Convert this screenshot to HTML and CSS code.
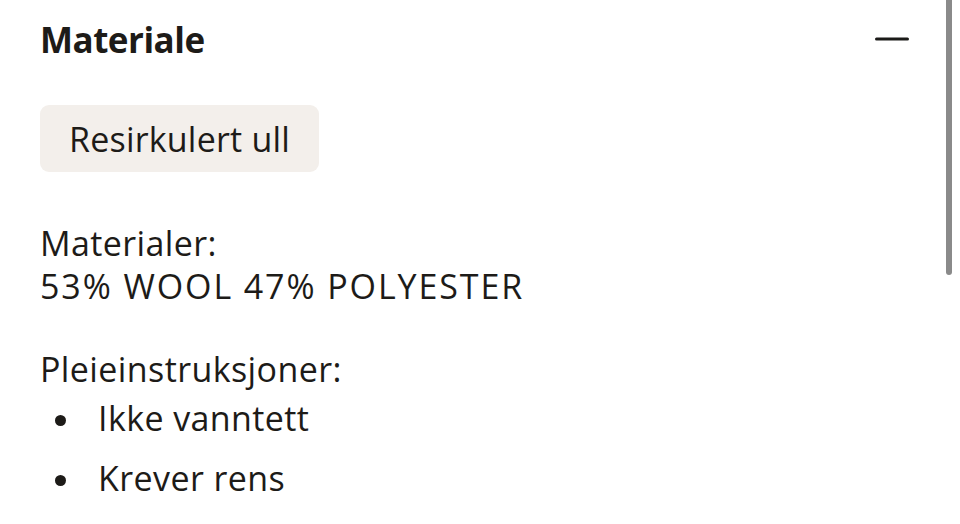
FILE: index.html
```html
<!DOCTYPE html>
<html lang="no">
<head>
<meta charset="utf-8">
<link rel="stylesheet" href="styles.css">
</head>
<body>
<main class="panel">
  <header class="panel-head">
    <h2 class="panel-title">Materiale</h2>
    <button class="toggle" aria-label="Lukk">
      <svg width="34" height="4" viewBox="0 0 34 4"><line x1="1.5" y1="2" x2="32.5" y2="2" stroke="#1b1a18" stroke-width="3" stroke-linecap="round"/></svg>
    </button>
  </header>
  <div class="chips">
    <span class="chip">Resirkulert ull</span>
  </div>
  <section class="block">
    <p class="line">Materialer:</p>
    <p class="line caps">53% WOOL 47% POLYESTER</p>
  </section>
  <section class="block">
    <p class="line">Pleieinstruksjoner:</p>
    <ul class="care">
      <li>Ikke vanntett</li>
      <li>Krever rens</li>
    </ul>
  </section>
</main>
<div class="scrollbar"></div>
</body>
</html>
```
FILE: styles.css
```css
html, body {
  margin: 0;
  padding: 0;
  background: #ffffff;
}
body {
  font-family: "Open Sans", "Noto Sans", sans-serif;
  color: #1d1b18;
  width: 960px;
  height: 524px;
  overflow: hidden;
}
.panel {
  padding: 14px 52px 0 40px;
}
.panel-head {
  display: flex;
  align-items: center;
  justify-content: space-between;
  height: 50px;
}
.panel-title {
  margin: 0;
  font-size: 35px;
  font-weight: 700;
  letter-spacing: -0.5px;
}
.toggle {
  border: 0;
  background: none;
  padding: 0;
  margin-right: -1px;
  display: flex;
}
.chips {
  margin-top: 41px;
  display: flex;
}
.chip {
  background: #f3efeb;
  border-radius: 9px;
  height: 67px;
  padding: 0 29px 0 29px;
  display: flex;
  align-items: center;
  font-size: 34px;
  letter-spacing: 0.2px;
}
.block {
  margin-top: 50px;
  letter-spacing: 0.4px;
}
.block + .block {
  margin-top: 40px;
}
.line {
  margin: 0;
  font-size: 34px;
  line-height: 43px;
}
.caps {
  letter-spacing: 1.9px;
}
.care {
  margin: 0;
  padding: 0 0 0 58px;
  list-style: none;
  font-size: 34px;
  line-height: 43px;
}
.care li {
  position: relative;
  margin-top: 6px;
}
.care li::before {
  content: "";
  position: absolute;
  left: -43px;
  top: 18px;
  width: 11px;
  height: 11px;
  border-radius: 50%;
  background: #1d1b18;
}
.care li + li {
  margin-top: 17px;
}
.scrollbar {
  position: absolute;
  top: 0;
  left: 946px;
  width: 6px;
  height: 275px;
  border-radius: 0 0 3px 3px;
  background: #8a8a8a;
}
```
